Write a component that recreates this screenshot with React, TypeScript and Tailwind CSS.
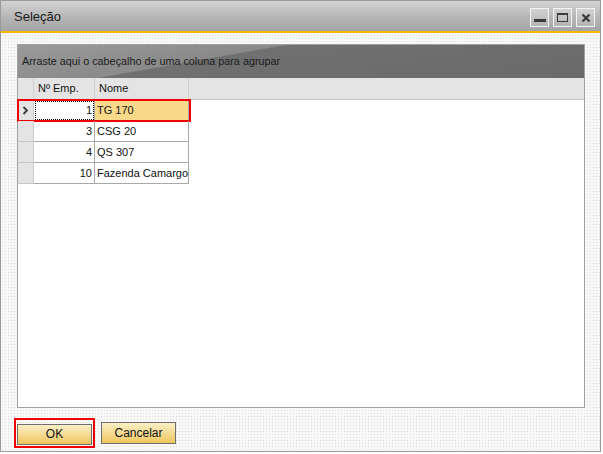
import { ReactNode } from 'react';

type Row = { id: number; name: string };

const rows: Row[] = [
  { id: 1, name: 'TG 170' },
  { id: 3, name: 'CSG 20' },
  { id: 4, name: 'QS 307' },
  { id: 10, name: 'Fazenda Camargo' },
];

const font = { fontFamily: '"Liberation Sans", Arial, sans-serif' };

const TitleButton = ({ children }: { children: ReactNode }) => (
  <div className="w-[19px] h-[19px] border border-[#f4f4f4] bg-gradient-to-b from-[#d2d2d2] to-[#b4b4b4] flex items-center justify-center">
    {children}
  </div>
);

const App = () => {
  return (
    <div className="w-[603px] h-[454px] bg-white text-[#111]" style={font}>
      <div className="w-[601px] h-[452px] border border-[#9a9a9a] flex flex-col bg-[radial-gradient(#dcdcdc_0.8px,#f8f8f8_0.8px)] bg-[length:3px_3px]">
        {/* title bar */}
        <div className="h-[30px] shrink-0 flex items-center justify-between pl-[13px] pr-[5px] bg-gradient-to-b from-[#d4d4d4] via-[#b8b8b8] to-[#a4a4a4]">
          <span className="text-[13px] text-[#1a1a1a] pt-[2px]">Seleção</span>
          <div className="flex gap-[4px] pt-[3px]">
            <TitleButton>
              <span className="block w-[12px] h-[3px] bg-[#3a3a3a] mt-[5px]" />
            </TitleButton>
            <TitleButton>
              <span className="block w-[11px] h-[9px] border border-t-2 border-[#3a3a3a]" />
            </TitleButton>
            <TitleButton>
              <svg width="10" height="10" viewBox="0 0 10 10">
                <path d="M1.5 1.5 L8.5 8.5 M8.5 1.5 L1.5 8.5" stroke="#3a3a3a" strokeWidth="2.2" />
              </svg>
            </TitleButton>
          </div>
        </div>
        <div className="h-[2px] shrink-0 bg-[#f5b800]" />

        {/* body */}
        <div className="flex-1 flex flex-col pt-[11px] pl-[16px] pr-[15px]">
          <div className="w-[568px] h-[364px] border border-[#a0a0a0] bg-white flex flex-col">
            <div className="h-[33px] shrink-0 flex items-center pl-[4px] text-[10.8px] text-[#1c1c1c] whitespace-nowrap bg-[linear-gradient(170deg,#9a9a9a_0%,#8a8a8a_35%,#707070_36%,#6a6a6a_100%)]">
              Arraste aqui o cabeçalho de uma coluna para agrupar
            </div>

            {/* header */}
            <div className="h-[22px] shrink-0 flex bg-[#e4e4e4] border-b border-[#c4c4c4] text-[11px] whitespace-nowrap">
              <div className="w-[16px] border-r border-[#d0d0d0]" />
              <div className="w-[61px] border-r border-[#d0d0d0] flex items-center pl-[4px]">Nº Emp.</div>
              <div className="w-[94px] border-r border-[#d0d0d0] flex items-center pl-[4px]">Nome</div>
            </div>

            {/* rows */}
            {rows.map((row, i) => (
              <div key={row.id} className="relative h-[21px] flex text-[11px] whitespace-nowrap">
                <div className="w-[16px] bg-[#e4e4e4] border-r border-b border-[#c8c8c8] flex items-center justify-center">
                  {i === 0 && (
                    <svg width="7" height="9" viewBox="0 0 7 9">
                      <path d="M1.5 1 L5 4.5 L1.5 8" stroke="#3c3c3c" strokeWidth="1.8" fill="none" />
                    </svg>
                  )}
                </div>
                <div
                  className={`w-[61px] border-r border-b border-[#a8a8a8] flex items-center justify-end pr-[2px] ${
                    i === 0 ? 'outline-1 outline-dotted outline-black -outline-offset-2' : ''
                  }`}
                >
                  {row.id}
                </div>
                <div
                  className={`w-[94px] border-r border-b border-[#a8a8a8] flex items-center pl-[2px] ${
                    i === 0 ? 'bg-[#f9da8a]' : ''
                  }`}
                >
                  {row.name}
                </div>
                {i === 0 && <span className="absolute left-[-1px] top-[-1px] w-[174px] h-[23px] border-2 border-[#ee0000]" />}
              </div>
            ))}
          </div>

          {/* footer buttons */}
          <div className="flex items-center gap-[6px] mt-[10px] ml-[-3px]">
            <div className="border-2 border-[#ee0000] p-[1px]">
              <button className="w-[75px] h-[21px] border border-[#6e6e6e] bg-gradient-to-b from-[#fbefc6] to-[#efc65a] text-[12px] text-[#111]">
                OK
              </button>
            </div>
            <button className="w-[75px] h-[22px] border border-[#6e6e6e] bg-gradient-to-b from-[#fbefc6] to-[#efc65a] text-[12px] text-[#111]">
              Cancelar
            </button>
          </div>
        </div>
      </div>
    </div>
  );
};

export default App;
